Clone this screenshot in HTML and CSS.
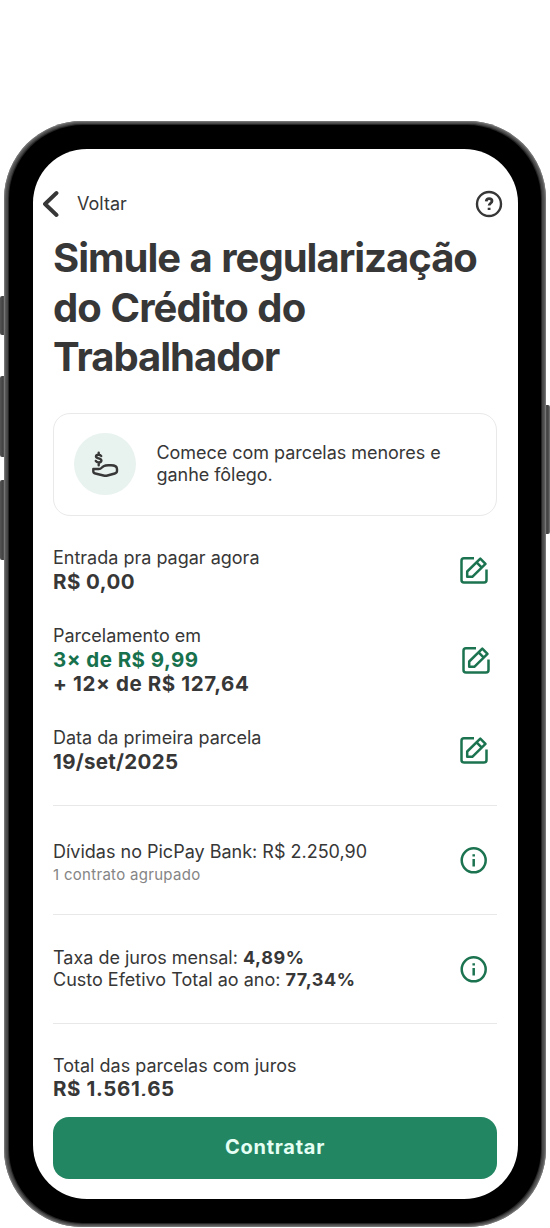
FILE: index.html
```html
<!DOCTYPE html>
<html lang="pt-BR">
<head>
<meta charset="utf-8">
<title>Simulação</title>
<link rel="stylesheet" href="styles.css">
</head>
<body>
<svg class="symbols" aria-hidden="true">
  <symbol id="edit" viewBox="0 0 28 28">
    <path d="M14 2.300H4a2.500 2.500 0 0 0-2.500 2.500V24A2.500 2.500 0 0 0 4 26.500h20a2.500 2.500 0 0 0 2.500-2.500V13.500"/>
    <path d="M7.200 20.800v-5.300L20.300 2.600l5.200 5.200L12.300 20.800zM16.600 6.400l5.200 5.200"/>
  </symbol>
  <symbol id="info" viewBox="0 0 28 28">
    <circle cx="13.700" cy="14.300" r="12"/>
    <path d="M13.700 13v7.600M13.700 8.300v2.200"/>
  </symbol>
</svg>
<div class="stage">
  <i class="key mute"></i><i class="key up"></i><i class="key down"></i><i class="key power"></i>
  <div class="phone">
    <div class="bezel">
      <main class="screen">
        <nav class="nav">
          <svg class="back" viewBox="0 0 18 28"><path d="M15.500 3L4 14l11.500 11"/></svg>
          <span class="back-label">Voltar</span>
          <svg class="help" viewBox="0 0 28 28"><circle cx="14" cy="14" r="12"/><path class="mark" d="M11.200 11.300c.2-1.700 1.300-2.700 2.900-2.700 1.700 0 2.900 1 2.900 2.500 0 2.100-2.900 2.200-2.900 4.500M14.100 17.800v2.300"/></svg>
        </nav>
        <h1 class="title">Simule a regularização<br><span class="middle">do Crédito do</span><br>Trabalhador</h1>
        <section class="card">
          <div class="badge"><svg class="hand" viewBox="0 0 28 28"><path d="M10.200 6C9.600 5 8.700 4.700 7.600 4.700c-1.500 0-2.600.7-2.600 1.800 0 2.500 5.400 1.200 5.400 4 0 1.200-1.100 1.900-2.700 1.900-1.300 0-2.400-.5-2.900-1.500M7.700 2.800v1.900M7.700 12.400v2.800"/><path d="M2.300 19h5.500c2.600 0 3-1.900 4.700-2.700 1.500-.8 3-1 5-1h2.500c3.700 0 6 1.200 6 3.700v2c0 1.500-.7 2.100-2.200 2.500l-7.300 2c-1.400.4-2.600.4-4 0l-8.200-2c-1.500-.4-2-1-2-2.300z"/></svg></div>
          <p class="text card-text">Comece com parcelas menores e<br>ganhe fôlego.</p>
        </section>
        <div class="details">
          <section class="row">
            <div><p class="text">Entrada pra pagar agora</p><p class="value">R$ 0,00</p></div>
            <svg class="icon"><use href="#edit"/></svg>
          </section>
          <section class="row installments">
            <div><p class="text">Parcelamento em</p><p class="value green">3× de R$ 9,99</p><p class="value wide">+ 12× de R$ 127,64</p></div>
            <svg class="icon"><use href="#edit"/></svg>
          </section>
          <section class="row date">
            <div><p class="text">Data da primeira parcela</p><p class="value tight">19/set/2025</p></div>
            <svg class="icon"><use href="#edit"/></svg>
          </section>
          <section class="row debts">
            <div class="debt-text"><p class="text">Dívidas no PicPay Bank: R$ 2.250,90</p><p class="note">1 contrato agrupado</p></div>
            <svg class="icon"><use href="#info"/></svg>
          </section>
          <section class="row rates">
            <div><p class="text">Taxa de juros mensal: <b>4,89%</b></p><p class="text">Custo Efetivo Total ao ano: <b>77,34%</b></p></div>
            <svg class="icon"><use href="#info"/></svg>
          </section>
          <section class="total"><p class="text">Total das parcelas com juros</p><p class="value wide">R$ 1.561,65</p></section>
        </div>
        <button class="submit">Contratar</button>
      </main>
    </div>
  </div>
</div>
</body>
</html>
```
FILE: styles.css
```css
* { box-sizing: border-box; }
body { margin: 0; background: #fff; font-family: Inter, "Liberation Sans", sans-serif; color: #373737; }
p, h1 { margin: 0; }
svg { display: block; fill: none; stroke: currentColor; flex: none; }
.symbols { position: absolute; width: 0; height: 0; }
.stage { position: relative; width: 550px; height: 1228px; padding: 121px 4px 0; overflow: hidden; }
.key { position: absolute; width: 5px; background: linear-gradient(90deg, #555, #414141 60%, #777); }
.mute { left: 0; top: 296px; height: 39px; border-radius: 2px 0 0 2px; }
.up { left: 0; top: 376px; height: 81px; border-radius: 2px 0 0 2px; }
.down { left: 0; top: 480px; height: 80px; border-radius: 2px 0 0 2px; }
.power { right: 0; top: 405px; height: 129px; border-radius: 0 2px 2px 0; }
.phone { position: relative; width: 542px; height: 1106px; border-radius: 78px; padding: 4px 5px; background: #4a4a4a; box-shadow: inset 0 0 2px 1px #858585; }
.bezel { height: 1098px; padding: 24px; border-radius: 74px; background: #000; box-shadow: 0 0 1px .5px #222; }
.screen { width: 484.500px; height: 1050px; border-radius: 54px; padding: 41px 20.500px 0 20px; background: #fff; overflow: hidden; }
.nav { display: flex; align-items: center; height: 28px; margin: 0 -6px 0 -12px; }
.back { width: 18px; height: 28px; stroke-width: 3.900; stroke-linecap: round; stroke-linejoin: round; }
.back-label { margin-left: 18px; font-size: 18px; line-height: 22px; }
.help { width: 28px; height: 28px; margin-left: auto; stroke-width: 2.400; }
.mark { stroke-width: 2.800; }
.title { height: 150px; margin-top: 15px; font-size: 40px; line-height: 49.700px; font-weight: 700; letter-spacing: -1px; word-spacing: 1px; white-space: nowrap; }
.middle { letter-spacing: -.9px; }
.card { display: flex; align-items: center; height: 103px; margin-top: 30px; padding: 0 20px 1px; border: 1px solid #e9e9e9; border-radius: 17px; }
.badge { display: flex; align-items: center; justify-content: center; width: 62px; height: 62px; border-radius: 50%; background: #e8f2ef; }
.hand { width: 28px; height: 28px; stroke-width: 2.400; stroke-linecap: round; stroke-linejoin: round; }
.card-text { margin-left: 20.500px; letter-spacing: -.04px; }
.text { font-size: 18px; line-height: 22px; white-space: nowrap; }
.value { padding-top: 1px; margin-bottom: -1px; font-size: 20.500px; line-height: 24.500px; font-weight: 700; letter-spacing: .45px; white-space: nowrap; }
.wide { letter-spacing: .6px; }
.tight { letter-spacing: .3px; }
.text b { font-weight: 700; letter-spacing: .6px; }
.green { color: #17714d; }
.note { margin-top: 1.200px; font-size: 15px; line-height: 22px; letter-spacing: .3px; color: #858585; }
.details { height: 549px; margin-top: 31px; overflow: hidden; }
.row { display: flex; align-items: center; justify-content: space-between; padding-right: 9px; }
.icon { width: 28px; height: 28px; color: #1b7350; stroke-width: 2.500; stroke-linejoin: round; }
.installments { margin-top: 31px; padding-right: 7px; }
.date { margin-top: 31.500px; padding-bottom: 31px; border-bottom: 1px solid #e8e8e8; }
.debts { height: 109px; border-bottom: 1px solid #e8e8e8; }
.debt-text { padding-top: 7.500px; }
.rates { height: 109px; border-bottom: 1px solid #e8e8e8; }
.total { padding-top: 31.500px; }
.total .value { padding-top: 0; }
.submit { display: block; width: 444px; height: 62px; margin-top: 20.500px; padding: 0 0 2px; border: 0; border-radius: 16px; background: #238662; color: #e5fff4; font: 700 20px/24px Inter, sans-serif; letter-spacing: .75px; }
```
